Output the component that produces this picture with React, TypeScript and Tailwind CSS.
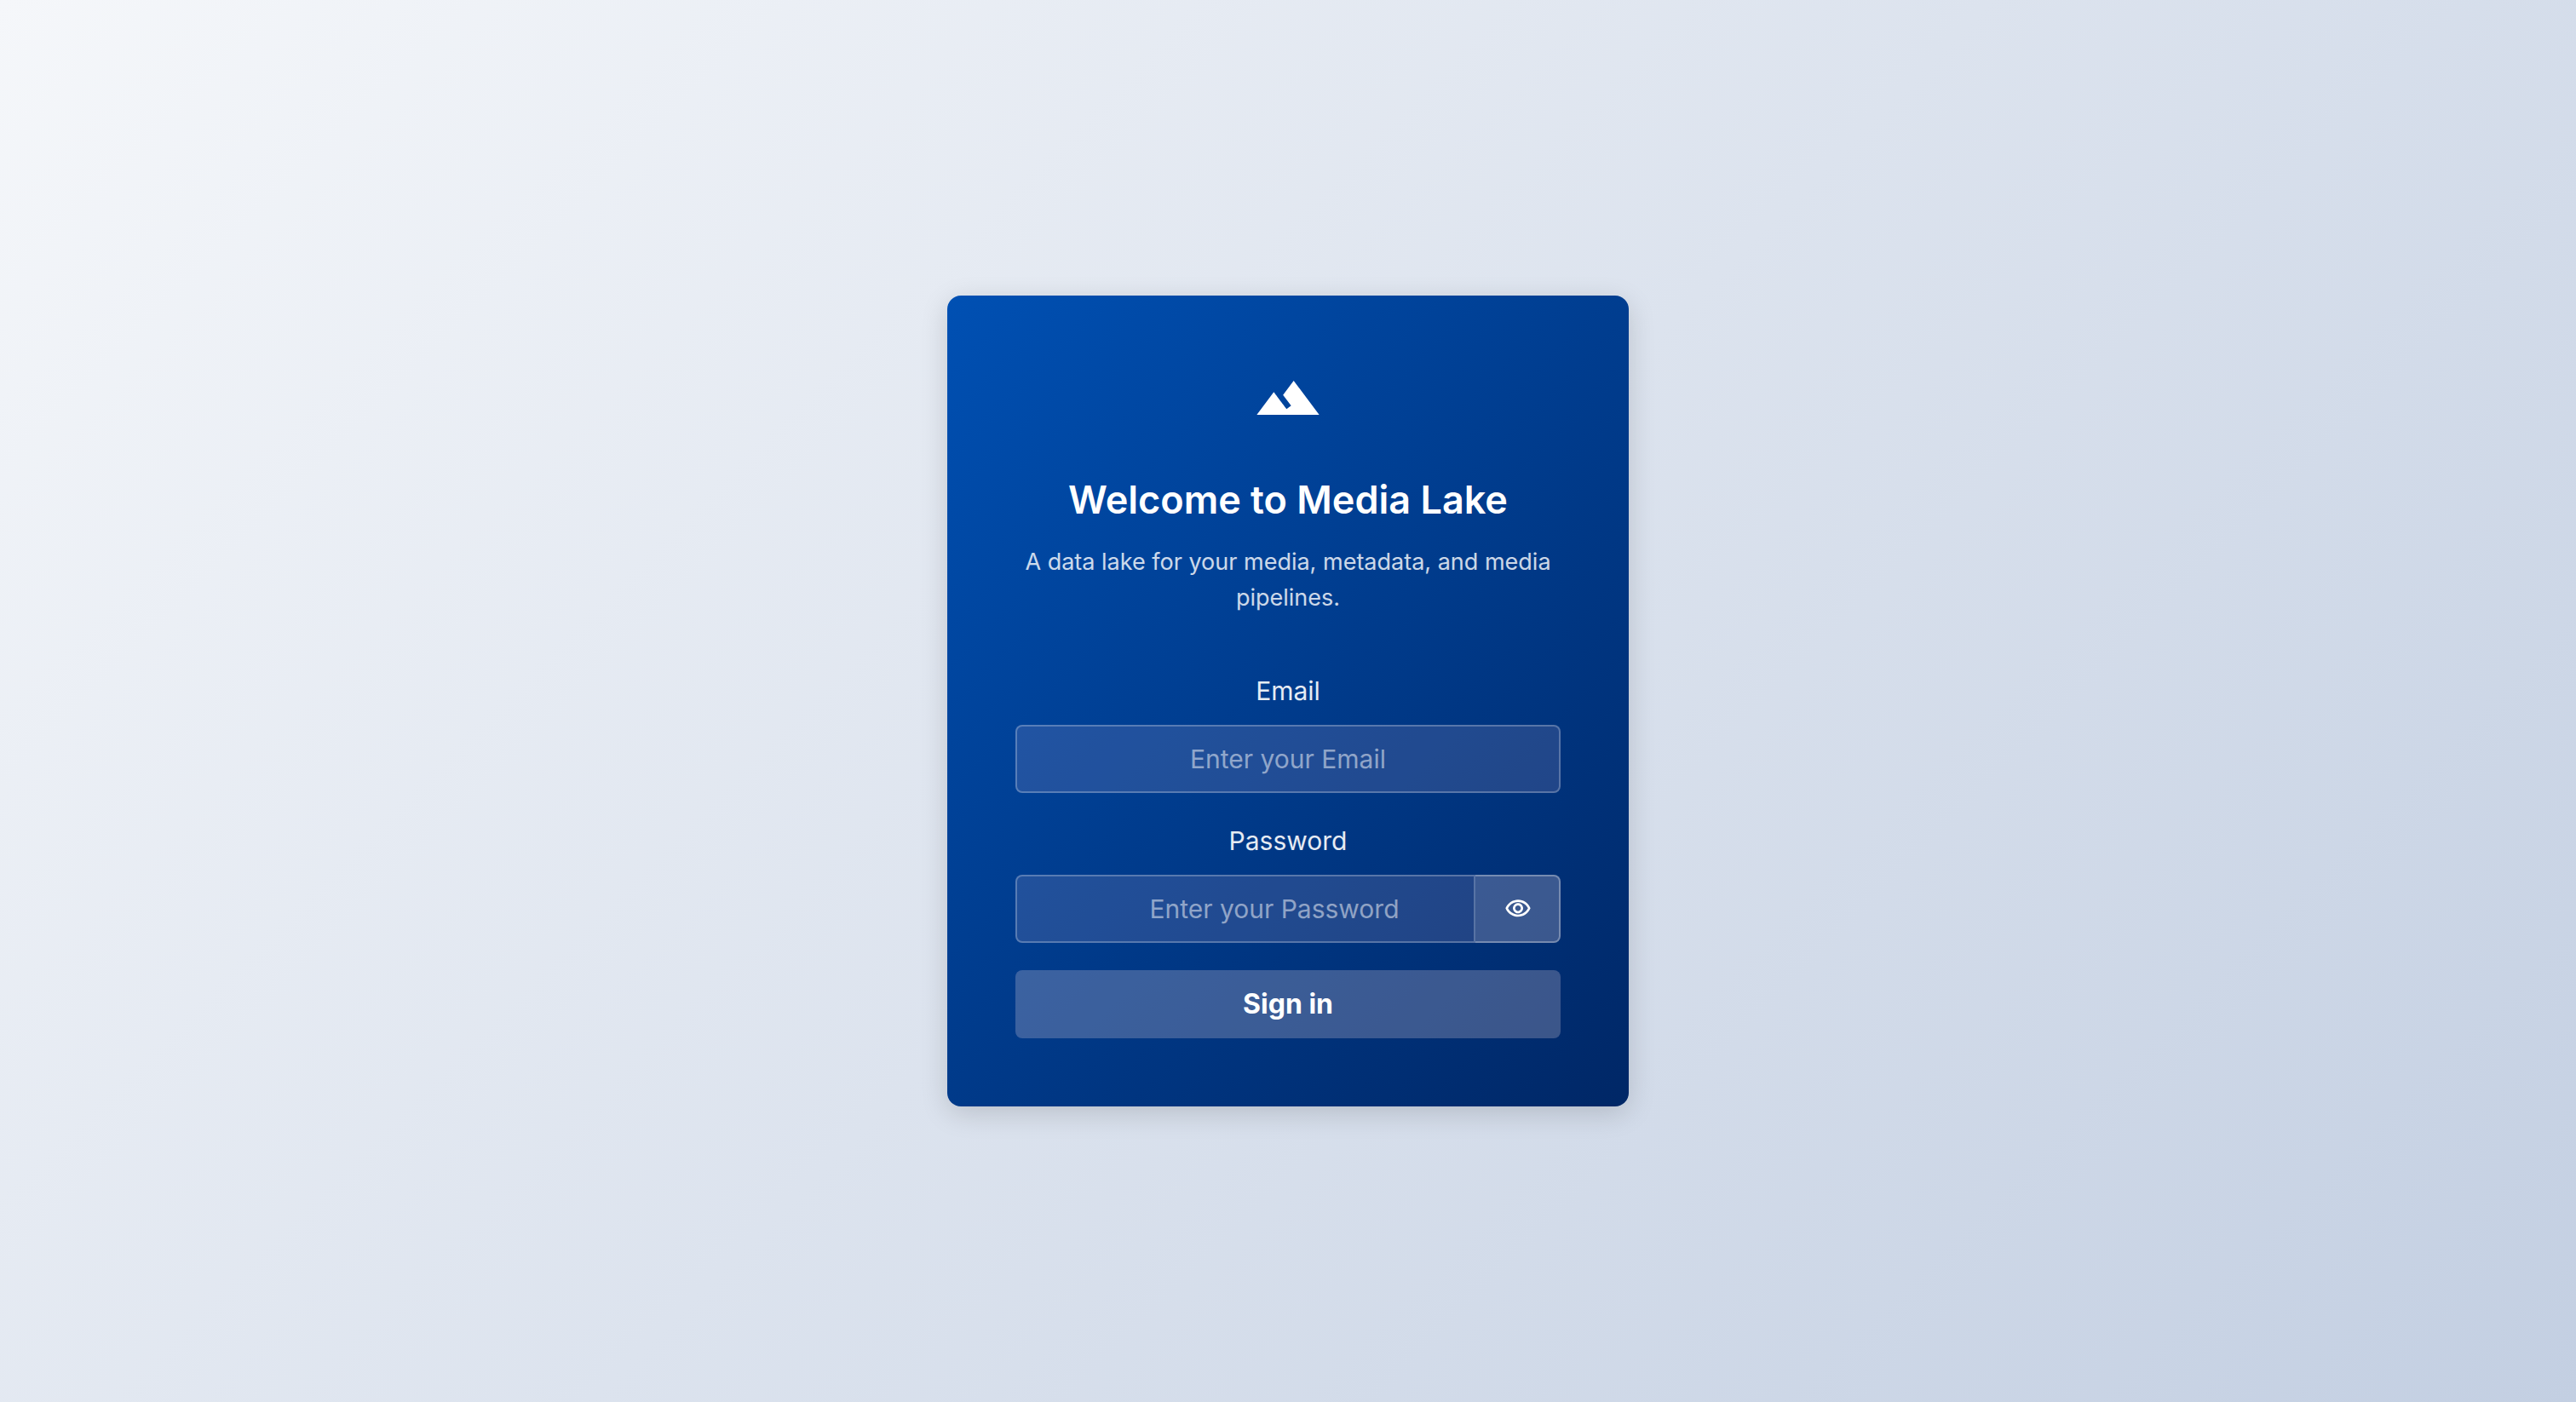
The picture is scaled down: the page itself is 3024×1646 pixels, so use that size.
import { useState } from "react";

const inputBase =
  "h-20 min-w-0 border-2 border-white/25 bg-[rgba(255,205,235,0.13)] text-center text-[30px] leading-[48px] text-white outline-none placeholder:text-white/50";

function MountainLogo() {
  return (
    <svg viewBox="0 0 24 24" className="size-20 fill-white" aria-hidden="true">
      <path d="m14 6-3.75 5 2.85 3.8-1.6 1.2C9.81 13.75 7 10 7 10l-6 8h22z" />
    </svg>
  );
}

function EyeIcon() {
  return (
    <svg viewBox="0 0 24 24" className="size-8 fill-white" aria-hidden="true">
      <path d="M12 6c3.79 0 7.17 2.13 8.82 5.5C19.17 14.87 15.79 17 12 17s-7.17-2.13-8.82-5.5C4.83 8.13 8.21 6 12 6m0-2C7 4 2.73 7.11 1 11.5 2.73 15.89 7 19 12 19s9.27-3.11 11-7.5C21.27 7.11 17 4 12 4m0 5c1.38 0 2.5 1.12 2.5 2.5S13.38 14 12 14s-2.5-1.12-2.5-2.5S10.62 9 12 9m0-2c-2.48 0-4.5 2.02-4.5 4.5S9.52 16 12 16s4.5-2.02 4.5-4.5S14.48 7 12 7" />
    </svg>
  );
}

export default function App() {
  const [visible, setVisible] = useState(false);

  return (
    <main className="flex min-h-screen items-center justify-center bg-[linear-gradient(135deg,#f5f7fa_0%,#c3cfe2_100%)] font-['Inter',sans-serif]">
      <section className="flex w-full max-w-[800px] flex-col items-center rounded-2xl bg-[linear-gradient(135deg,#0050b3_0%,#002766_100%)] p-20 shadow-[0_8px_32px_rgba(0,0,0,0.15)]">
        <MountainLogo />
        <h1 className="mt-12 text-center text-[45px] leading-[64px] font-semibold text-white">
          Welcome to Media Lake
        </h1>
        <p className="mt-5 text-center text-[27px] leading-[42px] text-white/80">
          A data lake for your media, metadata, and media pipelines.
        </p>

        <form
          className="mt-16 flex w-full flex-col gap-8"
          onSubmit={(event) => event.preventDefault()}
        >
          <div className="flex flex-col gap-4">
            <label htmlFor="email" className="text-center text-[30px] leading-[48px] text-white/90">
              Email
            </label>
            <input
              id="email"
              type="email"
              placeholder="Enter your Email"
              className={`${inputBase} w-full rounded-lg px-8`}
            />
          </div>

          <div className="flex flex-col gap-4">
            <label htmlFor="password" className="text-center text-[30px] leading-[48px] text-white/90">
              Password
            </label>
            <div className="flex">
              <input
                id="password"
                type={visible ? "text" : "password"}
                placeholder="Enter your Password"
                className={`${inputBase} flex-1 rounded-l-lg pr-8 pl-[100px]`}
              />
              <button
                type="button"
                aria-label="Show password"
                aria-pressed={visible}
                onClick={() => setVisible(!visible)}
                className="flex h-20 w-[100px] items-center justify-center rounded-r-lg border-2 border-l-0 border-white/30 bg-[rgba(255,229,235,0.23)] pl-0.5"
              >
                <EyeIcon />
              </button>
            </div>
          </div>

          <button
            type="submit"
            className="h-20 w-full rounded-lg bg-[rgba(255,229,235,0.23)] text-[32px] leading-[48px] font-bold text-white"
          >
            Sign in
          </button>
        </form>
      </section>
    </main>
  );
}
